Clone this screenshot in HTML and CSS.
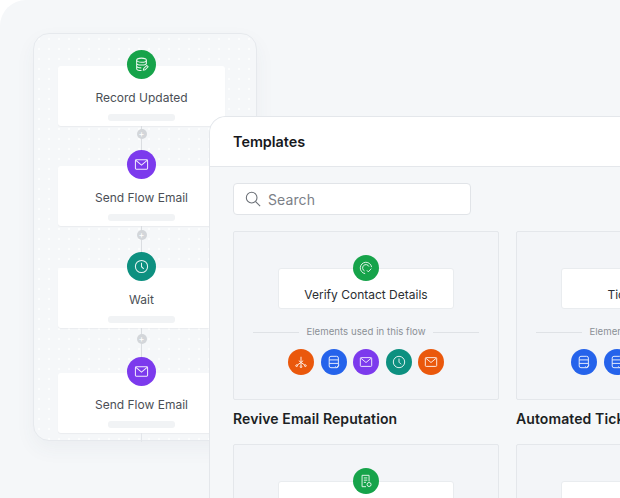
FILE: index.html
```html
<!DOCTYPE html>
<html lang="en">
<head>
  <meta charset="UTF-8" />
  <title>Templates</title>
  <link rel="stylesheet" href="styles.css">
</head>
<body>
  <svg class="sprites" width="0" height="0" aria-hidden="true">
    <symbol id="i-record" viewBox="0 0 16 16">
      <ellipse cx="8" cy="3.4" rx="5.2" ry="2.2"/>
      <path d="M2.8 3.4v8.8c0 1.2 2.3 2.2 5.2 2.2M13.2 3.4v4.4M2.8 6.4c0 1.2 2.3 2.2 5.2 2.2s5.2-1 5.2-2.2M2.8 9.4c0 1.2 2.3 2.2 5 2.2"/>
      <path d="M10 14l.4-1.8 3.2-3.2 1.4 1.4-3.2 3.2z"/>
    </symbol>
    <symbol id="i-mail" viewBox="0 0 16 16">
      <rect x="1.5" y="3" width="13" height="10" rx="1"/>
      <path d="M2 3.6l6 5 6-5"/>
    </symbol>
    <symbol id="i-clock" viewBox="0 0 16 16">
      <circle cx="8" cy="8" r="6.5"/>
      <path d="M8 4v4.2l2.4 2.4"/>
    </symbol>
    <symbol id="i-verify" viewBox="0 0 16 16">
      <path d="M14.4 7A6.5 6.5 0 1 0 7 14.4"/>
      <path d="M11.4 6.4A3.8 3.8 0 1 0 6.4 11.4"/>
      <path d="M9 10.6l1.6 1.8 3.4-3.6"/>
    </symbol>
    <symbol id="i-split" viewBox="0 0 16 16">
      <path d="M8 2v6.500M8 8.500l-4.500 3.200M8 8.500l4.500 3.200M8 8.500v4"/>
      <path d="M5.500 6.500L8 8.500l2.500-2"/>
      <circle cx="3" cy="12.200" r="1"/>
      <circle cx="13" cy="12.200" r="1"/>
      <circle cx="8" cy="13.400" r="1"/>
    </symbol>
    <symbol id="i-list" viewBox="0 0 16 16">
      <rect x="2.500" y="1.500" width="10.500" height="13" rx="2"/>
      <path d="M2.500 5.600h10.500M2.500 9.600h10.500"/>
      <path d="M9.500 13l1.400 1.400 3.200-3.200"/>
    </symbol>
    <symbol id="i-doc" viewBox="0 0 16 16">
      <path d="M8 14.500H3.500v-13h8v7"/>
      <path d="M5.500 4.500h4M5.500 7h4M5.500 9.500h2.500"/>
      <circle cx="11.500" cy="12" r="2.300"/>
    </symbol>
  </svg>

  <div class="stage">
    <section class="flow">
      <div class="node">
        <span class="dot dot-lg green"><svg><use href="#i-record"/></svg></span>
        <p>Record Updated</p>
        <span class="skeleton"></span>
      </div>
      <div class="link"><span class="plus">+</span></div>
      <div class="node">
        <span class="dot dot-lg purple"><svg><use href="#i-mail"/></svg></span>
        <p>Send Flow Email</p>
        <span class="skeleton"></span>
      </div>
      <div class="link link-mid"><span class="plus">+</span></div>
      <div class="node">
        <span class="dot dot-lg teal"><svg><use href="#i-clock"/></svg></span>
        <p>Wait</p>
        <span class="skeleton"></span>
      </div>
      <div class="link link-long"><span class="plus">+</span></div>
      <div class="node">
        <span class="dot dot-lg purple"><svg><use href="#i-mail"/></svg></span>
        <p>Send Flow Email</p>
        <span class="skeleton"></span>
      </div>
      <div class="tail"></div>
    </section>

    <section class="templates">
      <h2 class="templates-head">Templates</h2>
      <div class="templates-body">
        <div class="search">
          <svg viewBox="0 0 18 18"><circle cx="7.500" cy="7.500" r="6"/><path d="M12 12l5 5"/></svg>
          <span>Search</span>
        </div>
        <div class="grid">
          <article class="template">
            <div class="card">
              <div class="mini">
                <span class="dot green"><svg><use href="#i-verify"/></svg></span>
                <p>Verify Contact Details</p>
              </div>
              <div class="used">Elements used in this flow</div>
              <div class="dots">
                <span class="dot orange"><svg><use href="#i-split"/></svg></span>
                <span class="dot blue"><svg><use href="#i-list"/></svg></span>
                <span class="dot purple"><svg><use href="#i-mail"/></svg></span>
                <span class="dot teal"><svg><use href="#i-clock"/></svg></span>
                <span class="dot orange"><svg><use href="#i-mail"/></svg></span>
              </div>
            </div>
            <h3>Revive Email Reputation</h3>
          </article>
          <article class="template">
            <div class="card">
              <div class="mini">
                <span class="dot green"><svg><use href="#i-verify"/></svg></span>
                <p>Ticket Created</p>
              </div>
              <div class="used">Elements used in this flow</div>
              <div class="dots">
                <span class="dot blue"><svg><use href="#i-list"/></svg></span>
                <span class="dot blue"><svg><use href="#i-list"/></svg></span>
                <span class="dot purple"><svg><use href="#i-mail"/></svg></span>
                <span class="dot teal"><svg><use href="#i-clock"/></svg></span>
                <span class="dot orange"><svg><use href="#i-mail"/></svg></span>
              </div>
            </div>
            <h3>Automated Ticket Routing</h3>
          </article>
          <article class="template">
            <div class="card">
              <div class="mini">
                <span class="dot green"><svg><use href="#i-doc"/></svg></span>
              </div>
            </div>
          </article>
          <article class="template">
            <div class="card">
              <div class="mini"></div>
            </div>
          </article>
        </div>
      </div>
    </section>
  </div>
</body>
</html>
```

FILE: styles.css
```css
html, body {
  margin: 0;
  padding: 0;
  background: #fff;
}
body {
  width: 620px;
  height: 498px;
  overflow: hidden;
  font-family: Inter, "Liberation Sans", sans-serif;
}
.sprites {
  position: absolute;
}
p, h2, h3 {
  margin: 0;
}

.stage {
  position: relative;
  width: 620px;
  height: 498px;
  overflow: hidden;
  background: #f5f7f9;
  border-top-left-radius: 26px;
}

/* flow window */
.flow {
  position: absolute;
  left: 33px;
  top: 33px;
  width: 224px;
  height: 408px;
  box-sizing: border-box;
  padding: 32px 31px 0 24px;
  background-color: #f5f7f9;
  background-image: radial-gradient(#fcfdfd 1.2px, transparent 1.3px);
  background-size: 10px 10px;
  border: 1px solid #e6e9ed;
  border-radius: 16px;
  box-shadow: 0 8px 20px rgba(60, 70, 90, 0.05);
}
.node {
  display: flex;
  flex-direction: column;
  align-items: center;
  height: 60px;
  background: #fff;
  border-radius: 3px;
  box-shadow: 0 1px 1px rgba(60, 70, 90, 0.06);
}
.node p {
  margin-top: 1.5px;
  font-size: 12px;
  line-height: 22px;
  color: #4b4f56;
}
.skeleton {
  width: 67px;
  height: 7px;
  margin-top: 5px;
  background: #f1f3f5;
  border-radius: 3px;
}
.link {
  position: relative;
  display: flex;
  justify-content: center;
  height: 40px;
}
.link-mid {
  height: 42px;
}
.link-long {
  height: 45px;
}
.link::before {
  content: "";
  width: 1px;
  background: #dadde1;
}
.plus {
  position: absolute;
  top: 3px;
  left: 50%;
  width: 10px;
  height: 10px;
  margin-left: -5px;
  border-radius: 50%;
  background: #d3d6da;
  color: #fff;
  font-size: 9px;
  line-height: 10px;
  text-align: center;
}
.link-mid .plus {
  top: 4px;
}
.link-long .plus {
  top: 6px;
}
.tail {
  width: 1px;
  height: 9px;
  margin: 0 auto;
  background: #e3e6ea;
}

.dot {
  display: flex;
  align-items: center;
  justify-content: center;
  flex: none;
  width: 26px;
  height: 26px;
  border-radius: 50%;
}
.dot svg {
  width: 14px;
  height: 14px;
  fill: none;
  stroke: #fff;
  stroke-width: 1.1;
  opacity: 0.9;
}
.dot-lg {
  position: relative;
  z-index: 1;
  width: 29px;
  height: 29px;
  margin-top: -16px;
  margin-bottom: 6px;
}
.dot-lg svg {
  width: 15px;
  height: 15px;
}
.green { background: #16a34a; }
.purple { background: #7c3aed; }
.teal { background: #0d9080; }
.orange { background: #ea580c; }
.blue { background: #2563eb; }

/* templates window */
.templates {
  position: absolute;
  left: 209px;
  top: 116px;
  width: 460px;
  height: 420px;
  background: #f5f7f9;
  border: 1px solid #e4e7eb;
  border-radius: 16px 0 0 0;
}
.templates-head {
  height: 50px;
  box-sizing: border-box;
  padding-left: 23px;
  background: #fff;
  border-bottom: 1px solid #e4e7eb;
  border-radius: 16px 0 0 0;
  font-size: 14.4px;
  font-weight: 600;
  line-height: 49px;
  color: #16181c;
}
.templates-body {
  padding: 16px 0 0 23px;
}
.search {
  display: flex;
  align-items: center;
  gap: 7px;
  width: 238px;
  height: 32px;
  box-sizing: border-box;
  padding-left: 11px;
  background: #fff;
  border: 1px solid #e1e4e8;
  border-radius: 4px;
  font-size: 14px;
  letter-spacing: 0.1px;
  color: #7b8087;
}
.search svg {
  width: 16px;
  height: 16px;
  fill: none;
  stroke: #6b7077;
  stroke-width: 1.2;
}
.grid {
  display: grid;
  grid-template-columns: 266px 266px;
  column-gap: 17px;
  row-gap: 15px;
  margin-top: 16px;
}
.card {
  display: flex;
  flex-direction: column;
  align-items: center;
  height: 169px;
  box-sizing: border-box;
  padding-top: 36px;
  background: #f3f5f8;
  border: 1px solid #e4e7eb;
  border-radius: 2px;
}
.mini {
  display: flex;
  flex-direction: column;
  align-items: center;
  width: 176px;
  height: 41px;
  background: #fff;
  border: 1px solid #e9ecef;
  border-radius: 3px;
  box-sizing: border-box;
}
.mini .dot {
  margin-top: -14px;
}
.mini p {
  margin-top: 5px;
  font-size: 12px;
  line-height: 18px;
  color: #2b2e33;
}
.used {
  display: flex;
  align-items: center;
  gap: 7px;
  width: 226px;
  margin-top: 15px;
  font-size: 9.6px;
  line-height: 16px;
  white-space: nowrap;
  letter-spacing: 0.05px;
  color: #8b9096;
}
.used::before, .used::after {
  content: "";
  flex: 1;
  height: 1px;
  background: #dfe2e6;
}
.dots {
  display: flex;
  gap: 6.5px;
  margin-top: 9px;
}
.template h3 {
  margin-top: 9px;
  font-size: 14px;
  font-weight: 600;
  line-height: 20px;
  letter-spacing: 0.1px;
  white-space: nowrap;
  color: #1c1f24;
}
```
